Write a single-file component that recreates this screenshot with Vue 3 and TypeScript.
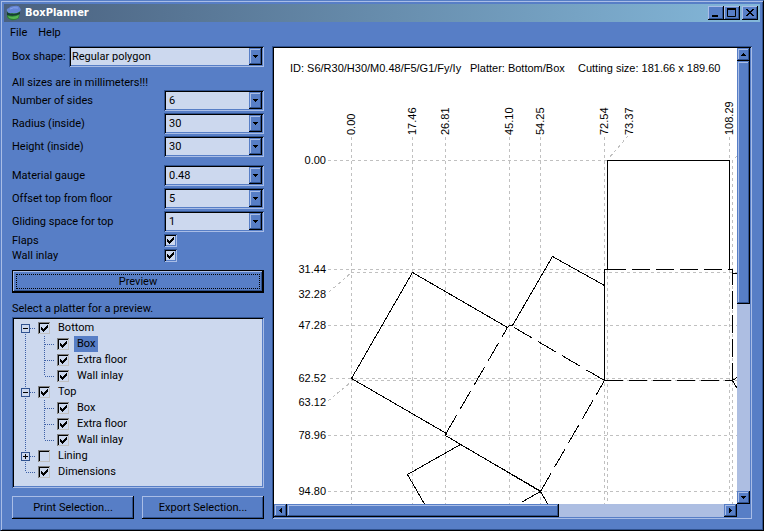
<script setup lang="ts">
import { reactive, ref, computed } from 'vue'

interface Field { id: string; label: string; value: string; options: string[] }
interface Node { name: string; checked: boolean; open: boolean; children: Node[] }
interface Row { key: string; node: Node; depth: number; first: boolean; last: boolean; parentLast: boolean }

const shape = ref('Regular polygon')
const groups = reactive<Field[][]>([
  [
    { id: 'sides', label: 'Number of sides', value: '6', options: ['3', '4', '5', '6', '8'] },
    { id: 'radius', label: 'Radius (inside)', value: '30', options: ['20', '30', '40'] },
    { id: 'height', label: 'Height (inside)', value: '30', options: ['20', '30', '40'] },
  ],
  [
    { id: 'gauge', label: 'Material gauge', value: '0.48', options: ['0.30', '0.48', '1.00'] },
    { id: 'offset', label: 'Offset top from floor', value: '5', options: ['0', '5', '10'] },
    { id: 'gliding', label: 'Gliding space for top', value: '1', options: ['0', '1', '2'] },
  ],
])
const flags = reactive([
  { id: 'flaps', label: 'Flaps', value: true },
  { id: 'inlay', label: 'Wall inlay', value: true },
])

const leaf = (name: string, checked = true): Node => ({ name, checked, open: false, children: [] })
const branch = (name: string, checked: boolean, open: boolean): Node => ({
  name, checked, open, children: [leaf('Box', checked), leaf('Extra floor', checked), leaf('Wall inlay', checked)],
})
const tree = reactive<Node[]>([
  branch('Bottom', true, true),
  branch('Top', true, true),
  branch('Lining', false, false),
  leaf('Dimensions'),
])
const selected = ref('0-0')

const rows = computed<Row[]>(() => {
  const out: Row[] = []
  tree.forEach((node, i) => {
    const last = i === tree.length - 1
    out.push({ key: `${i}`, node, depth: 0, first: i === 0, last, parentLast: false })
    if (node.open) {
      node.children.forEach((child, j) => out.push({
        key: `${i}-${j}`, node: child, depth: 1, first: false,
        last: j === node.children.length - 1, parentLast: last,
      }))
    }
  })
  return out
})

function guide(row: Row): string {
  if (row.depth === 0) {
    return `M4.5 ${row.first ? 8 : 0}V${row.last ? 8 : 16}M5 8.5H15`
  }
  return `${row.parentLast ? '' : 'M4.5 0V16'}M23.5 0V${row.last ? 8 : 16}M24 8.5H34`
}

const topLabels = [
  { x: 355, t: '0.00' }, { x: 416, t: '17.46' }, { x: 449, t: '26.81' }, { x: 513, t: '45.10' },
  { x: 544, t: '54.25' }, { x: 608, t: '72.54' }, { x: 633, t: '73.37' }, { x: 733, t: '108.29' },
]
const sideLabels = [
  { y: 164, t: '0.00' }, { y: 273, t: '31.44' }, { y: 298, t: '32.28' }, { y: 329, t: '47.28' },
  { y: 382, t: '62.52' }, { y: 406, t: '63.12' }, { y: 439, t: '78.96' }, { y: 495, t: '94.80' },
]
</script>

<template>
  <div class="window">
    <header class="titlebar">
      <svg class="logo" width="16" height="16" viewBox="0 0 16 16">
        <path d="M1 6L14 6L13 13Q9 16 5 15Q2 14 1 12Z" fill="#2c7d34" />
        <path d="M2 11Q7 13 13 10L12 13Q8 15 3 13Z" fill="#55b552" />
        <path d="M1 7Q7 11 14 7V9Q8 12 1 10Z" fill="#173c33" />
        <path d="M1 6Q0 4 3 3Q4 1 8 1Q13 0 14 3Q16 5 13 7Q10 9 6 8Q2 9 1 6Z" fill="#6585d6" />
        <path d="M4 4Q7 2 12 3" stroke="#86a3ea" fill="none" />
      </svg>
      <h1>BoxPlanner</h1>
      <button class="win" aria-label="Minimize"><svg width="16" height="14"><path d="M4 10h6" stroke="#000" stroke-width="2" /></svg></button>
      <button class="win" aria-label="Maximize"><svg width="16" height="14"><path d="M3.5 2v8.500h8V2M3 3h9" stroke="#000" fill="none" /><path d="M3 3h9" stroke="#000" stroke-width="2" /></svg></button>
      <button class="win close" aria-label="Close"><svg width="16" height="14" shape-rendering="crispEdges"><path d="M4 3h2v1h1v1h2v-1h1v-1h2v1h-1v1h-1v1h-1v1h1v1h1v1h1v1h-2v-1h-1v-1h-2v1h-1v1h-2v-1h1v-1h1v-1h1v-1h-1v-1h-1v-1h-1z" /></svg></button>
    </header>

    <nav class="menu">
      <button>File</button>
      <button>Help</button>
    </nav>

    <div class="content">
      <form class="sidebar" @submit.prevent>
        <div class="shape">
          <label for="shape">Box shape:</label>
          <div class="combo tight">
            <select id="shape" v-model="shape">
              <option>Regular polygon</option>
              <option>Rectangle</option>
            </select>
            <span class="arrow"><svg width="5" height="3"><path d="M0 0h5v1h-1v1h-1v1h-1v-1h-1v-1h-1z" /></svg></span>
          </div>
        </div>
        <p class="note">All sizes are in millimeters!!!</p>
        <div class="groups">
          <div v-for="(group, i) in groups" :key="i" class="group">
            <div v-for="f in group" :key="f.id" class="field">
              <label :for="f.id">{{ f.label }}</label>
              <div class="combo">
                <select :id="f.id" v-model="f.value">
                  <option v-for="o in f.options" :key="o">{{ o }}</option>
                </select>
                <span class="arrow"><svg width="5" height="3"><path d="M0 0h5v1h-1v1h-1v1h-1v-1h-1v-1h-1z" /></svg></span>
              </div>
            </div>
          </div>
        </div>
        <div class="flags">
          <div v-for="f in flags" :key="f.id" class="field">
            <label :for="f.id">{{ f.label }}</label>
            <input :id="f.id" v-model="f.value" type="checkbox" class="check" />
          </div>
        </div>
        <button class="preview" type="submit"><span>Preview</span></button>
        <p class="hint">Select a platter for a preview.</p>
        <ul class="tree">
          <li v-for="row in rows" :key="row.key" class="row">
            <span class="lead">
              <svg :width="row.depth ? 36 : 17" height="16" shape-rendering="crispEdges">
                <path :d="guide(row)" stroke="#3c5fa6" stroke-dasharray="1 1" fill="none" />
              </svg>
              <button
                v-if="row.node.children.length"
                type="button"
                class="toggle"
                :aria-label="row.node.open ? 'Collapse' : 'Expand'"
                @click="row.node.open = !row.node.open"
              >
                <svg width="7" height="7" shape-rendering="crispEdges">
                  <path :d="row.node.open ? 'M1 3.5h5' : 'M1 3.5h5M3.500 1v5'" stroke="#000" />
                </svg>
              </button>
            </span>
            <input :id="'node-' + row.key" v-model="row.node.checked" type="checkbox" class="check small" />
            <label :for="'node-' + row.key" :class="{ selected: selected === row.key }" @click="selected = row.key">{{ row.node.name }}</label>
          </li>
        </ul>
        <div class="actions">
          <button type="button" class="push">Print Selection...</button>
          <button type="button" class="push">Export Selection...</button>
        </div>
      </form>

      <main class="viewer">
        <div class="sheet">
          <svg width="600" height="600" viewBox="274 48 600 600" shape-rendering="crispEdges">
            <g class="grid">
              <path d="M351.5 137V640M412.5 137V640M445.5 137V640M509.5 137V640M540.5 137V640M604.5 137V640M729.5 137V160M607.5 270V640M729.5 270V640M732.5 160V640" />
              <path d="M328 160.500H607M328 269.500H604M351 272.500H860M328 325.500H860M330 378.500H860M351 380.500H860M328 435.500H860M328 491.500H860" />
              <path d="M628 136L609 158M737 156L733 160M329 292L351 273M328 401L351 382" />
            </g>
            <g class="cut">
              <path d="M607.5 270V160.500H729.500V270M607.500 269.500H604.500V380.500M729 269.500H732.500M732 273.500H760M732.500 380.500L745 372M732.500 380.500L745 402" />
              <path d="M604.5 285.500L552.500 256.500L512.500 325.500H509.500L507.500 327.500L412.500 272.500L351.500 378.500L446.500 433.500L445.500 435.500L540.500 491.500" />
              <path d="M540.5 491L460.500 444.500L407.500 474.500L445 540M540.500 491.500L560 525" />
            </g>
            <g class="fold">
              <path d="M607.5 269.500H729M604.500 380.500H732M732.500 380.500V270" />
            </g>
            <g class="fold slant">
              <path d="M604.5 380.500L512.500 326.500M446 433.500L507.500 327.500M540.500 491.500L604.500 380.500M540.500 491.500L445 546" />
            </g>
            <g class="text">
              <text x="290" y="72">ID: S6/R30/H30/M0.48/F5/G1/Fy/Iy</text>
              <text x="470" y="72">Platter: Bottom/Box</text>
              <text x="578" y="72">Cutting size: 181.66 x 189.60</text>
              <text v-for="l in topLabels" :key="l.t" :transform="`translate(${l.x} 135) rotate(-90)`">{{ l.t }}</text>
              <text v-for="l in sideLabels" :key="l.t" x="326" :y="l.y" text-anchor="end">{{ l.t }}</text>
            </g>
          </svg>
        </div>
        <div class="bar vertical">
          <button class="step" aria-label="Scroll up"><svg width="5" height="3"><path d="M2 0h1v1h1v1h1v1h-5v-1h1v-1h1z" /></svg></button>
          <span class="thumb"></span>
          <span class="track"></span>
          <button class="step" aria-label="Scroll down"><svg width="5" height="3"><path d="M0 0h5v1h-1v1h-1v1h-1v-1h-1v-1h-1z" /></svg></button>
        </div>
        <div class="bar horizontal">
          <button class="step" aria-label="Scroll left"><svg width="3" height="5"><path d="M3 0v5h-1v-1h-1v-1h-1v-1h1v-1h1v-1z" /></svg></button>
          <span class="thumb"></span>
          <span class="track"></span>
          <button class="step" aria-label="Scroll right"><svg width="3" height="5"><path d="M0 0v5h1v-1h1v-1h1v-1h-1v-1h-1v-1z" /></svg></button>
        </div>
      </main>
    </div>
  </div>
</template>

<style>
body {
  margin: 0;
  background: #577ec6;
}
</style>

<style scoped>
.window {
  --face: #577ec6;
  --light: #a9bde6;
  --dark: #30528f;
  --field: #ccd8ee;
  box-sizing: border-box;
  display: flex;
  flex-direction: column;
  height: 100vh;
  min-height: 520px;
  padding: 3px;
  border: 1px solid;
  border-color: var(--face) #000 #000 var(--face);
  box-shadow: inset 1px 1px var(--light), inset -1px -1px var(--dark);
  background: var(--face);
  color: #000;
  font: 11px/15px Roboto, "DejaVu Sans Condensed", sans-serif;
}
.window * {
  box-sizing: border-box;
}
svg {
  display: block;
}
button,
select {
  margin: 0;
  padding: 0;
  border: 0;
  border-radius: 0;
  background: none;
  color: inherit;
  font: inherit;
}
p,
h1,
ul {
  margin: 0;
  padding: 0;
}

.titlebar {
  display: flex;
  align-items: center;
  height: 18px;
  padding: 0 2px;
  background: linear-gradient(90deg, #4a617f, #84b8da);
}
.titlebar h1 {
  flex: 1;
  padding-left: 3px;
  color: #fff;
  font: bold 11px/16px "DejaVu Sans Condensed", "DejaVu Sans", sans-serif;
}
.win {
  width: 16px;
  height: 14px;
  background: var(--face);
  box-shadow: inset -1px -1px #000, inset 1px 1px var(--light), inset -2px -2px var(--dark);
}
.close {
  margin-left: 2px;
}

.menu {
  display: flex;
  gap: 11px;
  height: 20px;
  padding: 0 6px;
}

.content {
  display: grid;
  flex: 1;
  grid-template-columns: 252px minmax(0, 1fr);
  gap: 8px;
  min-height: 0;
  padding: 4px 8px 8px;
}
.sidebar {
  display: flex;
  flex-direction: column;
  min-height: 0;
}
.shape {
  display: grid;
  grid-template-columns: 57px 1fr;
  align-items: center;
}
.note {
  padding-top: 8px;
}
.hint {
  padding: 8px 0 1px;
}
.groups {
  display: grid;
  gap: 8px;
}
.group,
.flags {
  display: grid;
  gap: 2px;
}
.flags {
  padding: 1px 0 9px;
}
.field {
  display: grid;
  grid-template-columns: 152px 1fr;
  align-items: center;
}
.flags .field {
  height: 13px;
}
.shape label,
.field label {
  white-space: nowrap;
}

.combo {
  display: grid;
  grid-template-columns: 1fr 13px;
  height: 21px;
  padding: 2px;
  background: var(--field);
  box-shadow: inset 1px 1px var(--dark), inset -1px -1px var(--light), inset 2px 2px #000, inset -2px -2px var(--face);
}
.combo select {
  grid-area: 1 / 1 / 2 / 3;
  padding: 0 14px 0 3px;
  appearance: none;
}
.combo.tight select {
  padding-left: 1px;
}
.arrow,
.step {
  display: grid;
  place-items: center;
  background: var(--face);
  box-shadow: inset -1px -1px #000, inset 1px 1px var(--face), inset -2px -2px var(--dark), inset 2px 2px var(--light);
}
.arrow {
  grid-area: 1 / 2 / 2 / 3;
  pointer-events: none;
}

.check {
  width: 13px;
  height: 13px;
  margin: 0;
  padding: 3px;
  appearance: none;
  background: var(--field);
  box-shadow: inset 1px 1px var(--dark), inset -1px -1px var(--light), inset 2px 2px #000, inset -2px -2px var(--face);
}
.check.small {
  flex: none;
  width: 12px;
  height: 12px;
  box-shadow: inset 1px 1px #808080, inset -1px -1px #c0c0c0, inset 2px 2px #000;
}
.check:checked::before {
  display: block;
  width: 7px;
  height: 7px;
  background: #000;
  clip-path: polygon(0 2px, 1px 2px, 1px 3px, 2px 3px, 2px 4px, 3px 4px, 3px 3px, 4px 3px, 4px 2px, 5px 2px, 5px 1px, 6px 1px, 6px 0, 7px 0, 7px 3px, 6px 3px, 6px 4px, 5px 4px, 5px 5px, 4px 5px, 4px 6px, 3px 6px, 3px 7px, 2px 7px, 2px 6px, 1px 6px, 1px 5px, 0 5px);
  content: "";
}

.preview {
  height: 23px;
  padding: 3px;
  border: 1px solid #000;
  box-shadow: inset -1px -1px #000, inset 1px 1px var(--light), inset -2px -2px var(--dark);
}
.preview span {
  display: block;
  border: 1px dotted #000;
  line-height: 13px;
}

.tree {
  flex: 1;
  min-height: 0;
  padding: 3px 7px;
  overflow: hidden;
  background: var(--field);
  box-shadow: inset 1px 1px var(--dark), inset -1px -1px var(--light), inset 2px 2px #000, inset -2px -2px var(--face);
  list-style: none;
}
.row {
  display: flex;
  align-items: center;
  height: 16px;
  padding-left: 2px;
}
.row label {
  margin-left: 5px;
  padding: 0 3px;
  line-height: 16px;
}
.row .selected {
  background: var(--face);
}
.lead {
  display: grid;
  align-items: center;
  justify-items: start;
}
.lead > * {
  grid-area: 1 / 1;
}
.toggle {
  width: 9px;
  height: 9px;
  border: 1px solid var(--dark);
  background: var(--field);
}

.actions {
  display: grid;
  grid-template-columns: 1fr 1fr;
  gap: 8px;
  padding-top: 8px;
}
.push {
  height: 23px;
  box-shadow: inset -1px -1px #000, inset 1px 1px var(--light), inset -2px -2px var(--dark);
}

.viewer {
  display: grid;
  grid-template: minmax(0, 1fr) 13px / minmax(0, 1fr) 13px;
  min-height: 0;
  padding: 2px;
  background: var(--face);
  box-shadow: inset 1px 1px var(--dark), inset -1px -1px var(--light), inset 2px 2px #000;
}
.sheet {
  overflow: hidden;
  background: #fff;
}
.bar {
  display: flex;
  background: #adbee2;
}
.vertical {
  flex-direction: column;
}
.step {
  flex: none;
  width: 13px;
  height: 13px;
}
.thumb {
  flex: 272 1 0;
  background: var(--face);
  box-shadow: inset -1px -1px #000, inset 1px 1px var(--face), inset -2px -2px var(--dark), inset 2px 2px var(--light);
}
.track {
  flex: 165 1 0;
}
.vertical .thumb {
  flex-grow: 243;
}
.vertical .track {
  flex-grow: 187;
}

.grid path {
  stroke: #c0c0c0;
  stroke-dasharray: 3 3;
}
.cut path,
.fold path {
  fill: none;
  stroke: #000;
}
.fold path {
  stroke-dasharray: 18 6;
}
.slant path {
  stroke-dasharray: 21 7;
}
.text {
  font: 11px "Liberation Sans", Arial, sans-serif;
}
</style>
